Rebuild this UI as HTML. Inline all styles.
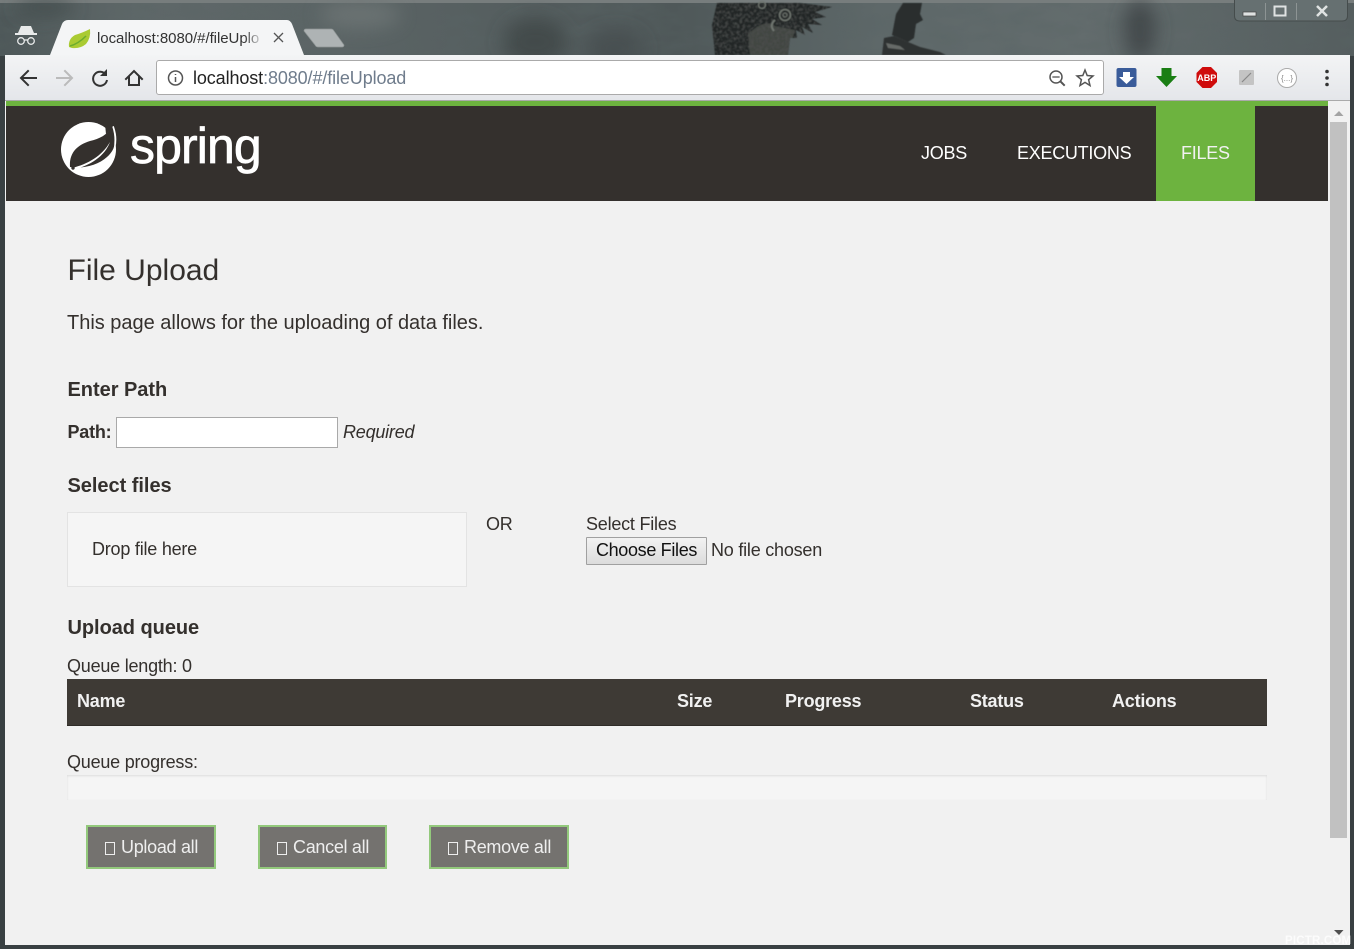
<!DOCTYPE html>
<html><head><meta charset="utf-8"><style>
html,body{margin:0;padding:0;width:1354px;height:949px;overflow:hidden;background:#394042}
body{position:relative;font-family:"Liberation Sans",sans-serif;color:#34302d}
.a{position:absolute;white-space:nowrap}
.t{font-size:18px;line-height:22px;letter-spacing:-.22px}
.b{font-weight:bold}
.btn{position:absolute;top:825px;height:40px;border:2px solid #93c97c;background:#74726f;color:#eee;font-size:18px;line-height:40px;box-sizing:content-box;letter-spacing:-.3px}
.btn i{display:inline-block;width:8px;height:11px;border:1px solid #eee;vertical-align:-2px;margin-right:6px}
</style></head><body>
<!-- Window frame -->
<svg class="a" style="left:0;top:0" width="1354" height="56" viewBox="0 0 1354 56">
<defs><linearGradient id="bg" x1="0" x2="1" y1="0" y2="0">
<stop offset="0" stop-color="#4e5859"/><stop offset=".1" stop-color="#5f6869"/><stop offset=".25" stop-color="#5b6465"/><stop offset=".4" stop-color="#545d5e"/><stop offset=".5" stop-color="#4f5859"/><stop offset=".65" stop-color="#5e6869"/><stop offset=".8" stop-color="#636c6d"/><stop offset="1" stop-color="#555e5f"/></linearGradient>
<filter id="bl"><feGaussianBlur stdDeviation="9"/></filter>
<filter id="bs"><feGaussianBlur stdDeviation=".6"/></filter>
<filter id="n" x="0" y="0" width="100%" height="100%"><feTurbulence type="fractalNoise" baseFrequency=".025 .06" numOctaves="5" seed="4"/><feColorMatrix values="0 0 0 0 .1  0 0 0 0 .13  0 0 0 0 .13  1.6 0 0 0 -.6"/></filter>
<filter id="f" x="0" y="0" width="100%" height="100%"><feTurbulence type="fractalNoise" baseFrequency=".35" numOctaves="2" seed="9"/><feColorMatrix values="0 0 0 0 .42  0 0 0 0 .44  0 0 0 0 .42  2.4 0 0 0 -1"/></filter>
<clipPath id="owl"><path d="M717 3L772 3L800 3L832 7L815 12L826 17L812 19L822 25L808 24L813 33L802 27L805 35L796 30L797 38L790 38L788 55L715 55L712 25Z"/></clipPath></defs>
<rect width="1354" height="56" fill="url(#bg)"/>
<rect width="1354" height="56" filter="url(#n)" opacity=".55"/>
<rect width="1354" height="3" fill="#777d7d"/>
<g filter="url(#bl)" opacity=".75"><ellipse cx="535" cy="42" rx="32" ry="24" fill="#3c4445"/><ellipse cx="615" cy="48" rx="28" ry="18" fill="#444c4d"/><ellipse cx="1140" cy="30" rx="16" ry="30" fill="#3a4142"/><ellipse cx="45" cy="8" rx="30" ry="8" fill="#404849"/><ellipse cx="360" cy="15" rx="40" ry="14" fill="#6f7777"/></g>
<g filter="url(#bs)">
<path d="M717 3L800 3L832 7L815 12L826 17L812 19L822 25L808 24L813 33L802 27L805 35L796 30L797 38L790 38L788 55L715 55L712 25Z" fill="#242727"/>
<g clip-path="url(#owl)"><rect x="712" y="3" width="120" height="52" filter="url(#f)" opacity=".3"/>
<path d="M748 34Q765 18 775 26L795 30L788 55H750Z" fill="#4e514d" opacity=".75"/></g>
<g fill="none" stroke="#6f766f"><circle cx="785" cy="15" r="5.500" stroke-width="1.500"/><circle cx="785" cy="15" r="2" stroke-width="1"/><circle cx="762" cy="5" r="3.500" stroke-width="1.200"/><path d="M775 20Q769 25 774 31" stroke-width="2"/></g>
<path d="M903 3H922L920 14L923 20L916 24L914 38L908 42L892 35L896 14Z" fill="#292d2d"/>
<path d="M884 38L894 36L908 42L920 47L940 52L946 55H882Z" fill="#2f3333"/>
<path d="M886 43L900 46L905 50L888 48Z" fill="#666b68"/>
</g>
<g fill="none" stroke="#3d4444"><path d="M1234.500 0V16Q1234.500 21 1240 21H1342Q1347.500 21 1347.500 16V0" stroke="#454c4c" fill="#667071"/><path d="M1265.500 3V20M1296.500 3V20" stroke="#8d9494"/></g>
<rect x="1243" y="12" width="13" height="4" fill="#dfe2e2" stroke="#444" stroke-width=".7"/>
<rect x="1274.500" y="6.500" width="11" height="9" fill="none" stroke="#dfe2e2" stroke-width="2"/>
<path d="M1317 6L1327 16M1327 6L1317 16" stroke="#dfe2e2" stroke-width="2.500"/>
<!-- incognito -->
<path d="M18 33L21 26H31L34 33H37V35H15V33Z" fill="#e8eaea"/>
<g fill="none" stroke="#e8eaea" stroke-width="1.300"><circle cx="21" cy="41" r="3.300"/><circle cx="31" cy="41" r="3.300"/><path d="M24 40H28"/></g>
<!-- new tab -->
<path d="M306 29H331Q333 29 334 31L344 45Q344 47 342 47H318Q316 47 315 45L304 31Q304 29 306 29Z" fill="#aeb3b4" stroke="#8e9494" stroke-width=".7"/>
<!-- active tab -->
<path d="M50 55L62 24Q64 20 68 20H287Q290 20 292 24L304 55Z" fill="#f4f5f6"/>
<path d="M69 47Q68 39 75 35Q82 33 90 29Q91 38 86 44Q80 49 72 48Z" fill="#aacb33"/><path d="M70 46Q78 44 86 36" stroke="#6cac2e" stroke-width="1.500" fill="none"/>
<path d="M274 33L283 42M283 33L274 42" stroke="#555" stroke-width="1.300"/>
</svg>
<div class="a" style="left:97px;top:29px;width:167px;overflow:hidden;font-size:15px;line-height:20px;color:#333;letter-spacing:-.05px">localhost:8080/#/fileUplo</div>
<div class="a" style="left:244px;top:28px;width:20px;height:20px;background:linear-gradient(90deg,rgba(244,245,246,0),#f4f5f6)"></div>
<!-- Toolbar -->
<div class="a" style="left:5px;top:55px;width:1345px;height:46px;background:linear-gradient(#f3f4f5,#e4e6ea);box-sizing:border-box;border-bottom:1px solid #aaa"></div>
<div class="a" style="left:156px;top:60px;width:948px;height:35px;box-sizing:border-box;background:#fff;border:1px solid #aaa;border-radius:3px"></div>
<div class="a" style="left:193px;top:67px;font-size:18px;line-height:22px;color:#6f7c8c;letter-spacing:-.11px"><span style="color:#222">localhost</span>:8080/#/fileUpload</div>
<svg class="a" style="left:0;top:55px" width="1354" height="46" viewBox="0 55 1354 46">
<g fill="none" stroke-linecap="square">
<path d="M36 78H22M28 71L21 78L28 85" stroke="#333" stroke-width="2"/>
<path d="M57 78H71M65 71L72 78L65 85" stroke="#bbb" stroke-width="2"/>
<path d="M106 75A7 7 0 1 0 107 80" stroke="#333" stroke-width="2" stroke-linecap="butt"/>
<path d="M107 69V76H100Z" fill="#333"/>
<path d="M126 79L134 71L142 79M129 77V85H139V77" stroke="#333" stroke-width="2"/>
<circle cx="175.500" cy="78" r="7" stroke="#555" stroke-width="1.500"/>
<path d="M175.500 77V82M175.500 74V75" stroke="#555" stroke-width="1.500" stroke-linecap="butt"/>
<circle cx="1056" cy="77" r="6" stroke="#555" stroke-width="1.500"/><path d="M1053 77H1059" stroke="#555" stroke-width="1.300"/><path d="M1060.500 81.500L1064 85" stroke="#555" stroke-width="2"/>
<path d="M1085 70L1087.200 75.500L1093 76L1088.600 79.700L1090 85.500L1085 82.400L1080 85.500L1081.400 79.700L1077 76L1082.800 75.500Z" stroke="#555" stroke-width="1.500"/>
</g>
<rect x="1116.500" y="68" width="20" height="19" rx="2" fill="#3a5c9a"/>
<path d="M1123 72H1130V77H1134L1126.500 84L1119 77H1123Z" fill="#fff"/>
<path d="M1161.500 68H1171.500V76H1177L1166.500 87L1156 76H1161.500Z" fill="#1a7e14"/>
<path d="M1202.500 67H1211L1217 73V82L1211 88H1202.500L1196.500 82V73Z" fill="#cf0c0c"/>
<text x="1206.800" y="81" font-family="Liberation Sans" font-size="9" font-weight="bold" fill="#fff" text-anchor="middle">ABP</text>
<rect x="1239" y="70" width="15" height="15" rx="1" fill="#c4c4c4"/><path d="M1242 82L1251 73" stroke="#888" stroke-width="1.200"/>
<circle cx="1287" cy="78" r="9.500" fill="#fff" stroke="#aaa" stroke-width="1"/>
<text x="1287" y="81" font-family="Liberation Sans" font-size="8" fill="#888" text-anchor="middle">{...}</text>
<g fill="#333"><circle cx="1327" cy="71.500" r="1.800"/><circle cx="1327" cy="78" r="1.800"/><circle cx="1327" cy="84.500" r="1.800"/></g>
</svg>
<!-- Page -->
<div class="a" style="left:5px;top:101px;width:1345px;height:844px;background:#f1f1f1"></div>
<div class="a" style="left:6px;top:101px;width:1322px;height:5px;background:#6db33f"></div>
<div class="a" style="left:6px;top:106px;width:1322px;height:95px;background:#34302d"></div>
<div class="a" style="left:1156px;top:106px;width:99px;height:95px;background:#6db33f"></div>
<svg class="a" style="left:58px;top:118px" width="64" height="64" viewBox="58 118 64 64">
<circle cx="88.500" cy="149.500" r="27.500" fill="#fff"/>
<path d="M70 167C69 153 77 145 90 141C100 139 108 134 113 126C118 140 115 150 107 157C98 165 84 169 70 167Z" fill="#34302d"/>
<path d="M72 168C88 164 102 156 110 142C105 156 90 166 72 170Z" fill="#fff"/>
<path d="M113 124Q118 136 115.500 147L113.500 150Q116 137 112 126Z" fill="#fff"/>
<path d="M105 124L113 122L117 127L113 126Q110 131 106 134Z" fill="#34302d"/>
<circle cx="73" cy="168" r="1.700" fill="#34302d"/>
</svg>
<div class="a" style="left:130px;top:116px;font-size:50px;line-height:60px;color:#fff;letter-spacing:-.9px;-webkit-text-stroke:.7px #fff">spring</div>
<div class="a t" style="left:921px;top:142px;color:#fff;letter-spacing:-.25px">JOBS</div>
<div class="a t" style="left:1017px;top:142px;color:#fff;letter-spacing:-.27px">EXECUTIONS</div>
<div class="a t" style="left:1181px;top:142px;color:#f1f1f1;letter-spacing:-.25px">FILES</div>

<div class="a" style="left:67.500px;top:253px;font-size:30px;line-height:36px;color:#34302d">File Upload</div>
<div class="a" style="left:67px;top:312px;font-size:20px;line-height:22px;letter-spacing:-.01px">This page allows for the uploading of data files.</div>
<div class="a b" style="left:67.500px;top:378px;font-size:20px;line-height:24px;letter-spacing:-.03px">Enter Path</div>
<div class="a t b" style="left:67.500px;top:421px">Path:</div>
<div class="a" style="left:116px;top:417px;width:222px;height:31px;box-sizing:border-box;background:#fff;border:1px solid #a9a9a9"></div>
<div class="a t" style="left:343px;top:421px;font-style:italic">Required</div>
<div class="a b" style="left:67.500px;top:474px;font-size:20px;line-height:24px;letter-spacing:-.03px">Select files</div>
<div class="a" style="left:67px;top:512px;width:400px;height:75px;box-sizing:border-box;background:#f5f5f5;border:1px solid #e3e3e3"></div>
<div class="a t" style="left:92px;top:538px">Drop file here</div>
<div class="a t" style="left:486px;top:513px">OR</div>
<div class="a t" style="left:586px;top:513px">Select Files</div>
<div class="a" style="left:586px;top:537px;width:121px;height:28px;box-sizing:border-box;border:1px solid #a0a0a0;border-radius:1px;background:linear-gradient(#f2f2f2,#dcdcdc);font-size:18px;line-height:25px;text-align:center;color:#111;letter-spacing:-.33px">Choose Files</div>
<div class="a t" style="left:711px;top:539px">No file chosen</div>
<div class="a b" style="left:67.500px;top:616px;font-size:20px;line-height:24px;letter-spacing:-.05px">Upload queue</div>
<div class="a t" style="left:67px;top:655px">Queue length: 0</div>
<div class="a" style="left:67px;top:679px;width:1200px;height:47px;background:#3e3a35;border-bottom:1px solid #2f2c28;box-sizing:border-box"></div>
<div class="a t b" style="left:77px;top:690px;color:#f1f1f1">Name</div>
<div class="a t b" style="left:677px;top:690px;color:#f1f1f1">Size</div>
<div class="a t b" style="left:785px;top:690px;color:#f1f1f1">Progress</div>
<div class="a t b" style="left:970px;top:690px;color:#f1f1f1">Status</div>
<div class="a t b" style="left:1112px;top:690px;color:#f1f1f1">Actions</div>
<div class="a t" style="left:67px;top:751px">Queue progress:</div>
<div class="a" style="left:67px;top:775px;width:1200px;height:25px;background:#f5f5f5;box-shadow:inset 0 1px 2px rgba(0,0,0,.1)"></div>
<div class="btn" style="left:86px;width:126px"><span class="a" style="left:17px;top:0"><i></i>Upload all</span></div>
<div class="btn" style="left:258px;width:125px"><span class="a" style="left:17px;top:0"><i></i>Cancel all</span></div>
<div class="btn" style="left:429px;width:136px"><span class="a" style="left:17px;top:0"><i></i>Remove all</span></div>
<!-- Scrollbar -->
<div class="a" style="left:1328px;top:101px;width:22px;height:844px;background:#f1f1f1"></div>
<div class="a" style="left:1330px;top:122px;width:17px;height:716px;background:#c1c1c1"></div>
<svg class="a" style="left:1328px;top:101px" width="22" height="844"><path d="M6 15L11 10L15.500 15Z" fill="#a3a3a3"/><path d="M6 829L11 834L15.500 829Z" fill="#505050"/></svg>
<div class="a" style="left:1285px;top:936px;font-size:11.500px;font-weight:bold;line-height:10px;color:rgba(255,255,255,.75);letter-spacing:.2px">PICTR.COM</div>
</body></html>
